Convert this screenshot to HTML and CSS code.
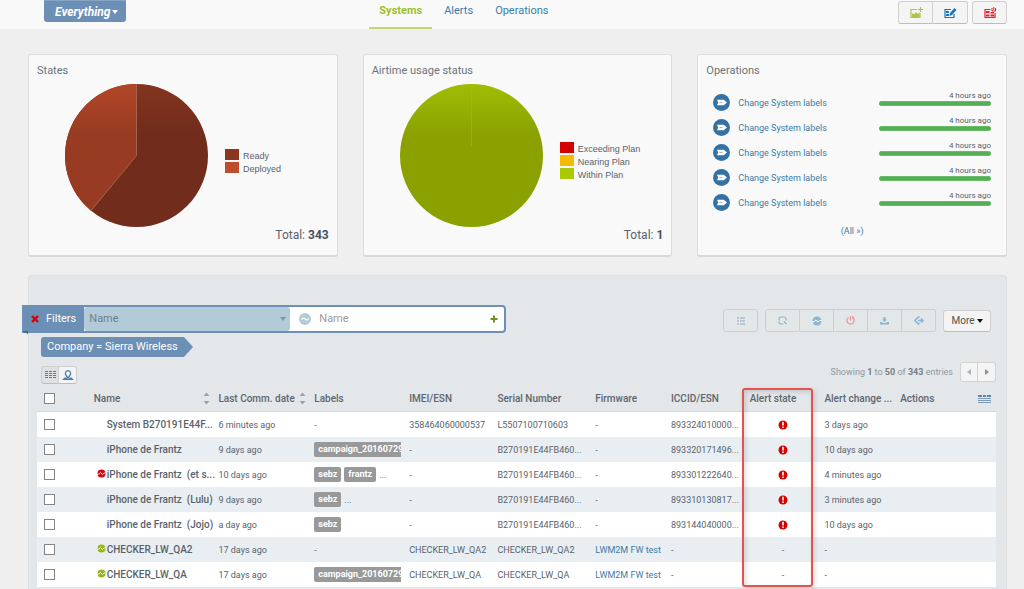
FILE: index.html
```html
<!DOCTYPE html>
<html lang="en">
<head>
<meta charset="utf-8">
<title>Systems</title>
<link rel="stylesheet" href="styles.css">
</head>
<body>
<svg class="defs" aria-hidden="true">
  <symbol id="i-op" viewBox="0 0 17 17"><circle cx="8.500" cy="8.500" r="8.500" fill="#3472a4"/><path d="M4 5.800h6.800l3.200 2.700-3.200 2.700H4l1.200-2.700z" fill="#fff"/><path d="M6.500 8.500h3" stroke="#9dbbd3"/></symbol>
  <symbol id="i-alert" viewBox="0 0 10 10"><circle cx="5" cy="5" r="4.500" fill="#d60000"/><path d="M4.200 1.800h1.600v3.600H4.200zM4.200 6.500h1.600v1.600H4.200z" fill="#fff"/></symbol>
  <symbol id="i-comm" viewBox="0 0 10 10"><circle cx="5" cy="5" r="4.500" fill="currentColor"/><path d="M0 5.800 2.200 5.600 4 3.900 6 6.200 7.800 4.500 10 4.400" fill="none" stroke="#fff" stroke-width="1"/></symbol>
  <symbol id="i-sort" viewBox="0 0 7 13"><path d="M.5 4 3.500.5l3 3.500zM.5 9l3 3.500 3-3.500z" fill="#9aa2a8"/></symbol>
</svg>

<header class="topbar">
  <button class="scope" type="button">Everything<span class="caret"></span></button>
  <nav class="tabs">
    <a class="tab tab-active" href="#systems">Systems</a>
    <a class="tab" href="#alerts">Alerts</a>
    <a class="tab" href="#operations">Operations</a>
  </nav>
  <div class="top-actions">
    <div class="btn-group">
      <button class="btn green" type="button" aria-label="Add widget"><svg width="14" height="12" viewBox="0 0 14 12"><path d="M8 2.500H2v8h9V6" fill="none" stroke="currentColor" stroke-width="1.200"/><path d="M3 10V6l2 1.500L7 5l2 2 1.500-2v5z" fill="currentColor"/><path d="M11.500 0v5M9 2.500h5" stroke="currentColor" stroke-width="1.200"/></svg></button>
      <button class="btn blue" type="button" aria-label="Edit dashboard"><svg width="14" height="12" viewBox="0 0 14 12"><path d="M8 2.500H2v8h9V7" fill="none" stroke="currentColor" stroke-width="1.200"/><path d="M3 4h3v2H3zM3 7h3v2H3z" fill="currentColor"/><path d="m6.500 9 .5-3 4.500-5L13.500 3 9 8z" fill="currentColor"/></svg></button>
    </div>
    <div class="btn-group">
      <button class="btn red" type="button" aria-label="Remove dashboard"><svg width="14" height="12" viewBox="0 0 14 12"><path d="M7.500 2.500H2v8h10V6" fill="none" stroke="currentColor" stroke-width="1.200"/><path d="M3 4h3.500v2H3zM3 7.500h3.500v2H3zM7.500 7.500H11v2H7.500zM7.500 5H11v1.500H7.500z" fill="currentColor"/><path d="M9 1v3h3.500V1M10.800 0v3" fill="none" stroke="currentColor"/></svg></button>
    </div>
  </div>
</header>

<main class="page">
  <div class="cards">
    <section class="card">
      <h2>States</h2>
      <div class="chart">
        <svg class="pie" width="143" height="143" viewBox="0 0 143 143" role="img" aria-label="States">
          <defs>
            <linearGradient id="g1" gradientUnits="userSpaceOnUse" x1="0" y1="0" x2="0" y2="50"><stop offset="0" stop-color="#83351f"/><stop offset="1" stop-color="#722c1b"/></linearGradient>
            <linearGradient id="g2" gradientUnits="userSpaceOnUse" x1="0" y1="0" x2="0" y2="50"><stop offset="0" stop-color="#b24627"/><stop offset="1" stop-color="#983b23"/></linearGradient>
          </defs>
          <circle cx="71.500" cy="71.500" r="71.500" fill="url(#g1)"/>
          <path d="M71.500 71.500V0A71.500 71.500 0 0 0 26 126.700z" fill="url(#g2)"/>
          <path d="M71.500 0v71.500L26 126.700" fill="none" stroke="#a4634f"/>
        </svg>
        <ul class="legend">
          <li><i class="swatch s-ready"></i>Ready</li>
          <li><i class="swatch s-deployed"></i>Deployed</li>
        </ul>
      </div>
      <p class="total">Total: <b>343</b></p>
    </section>
    <section class="card">
      <h2>Airtime usage status</h2>
      <div class="chart">
        <svg class="pie" width="143" height="143" viewBox="0 0 143 143" role="img" aria-label="Airtime usage status">
          <defs><linearGradient id="g3" gradientUnits="userSpaceOnUse" x1="0" y1="0" x2="0" y2="52"><stop offset="0" stop-color="#a0bd04"/><stop offset="1" stop-color="#8aa100"/></linearGradient></defs>
          <circle cx="71.500" cy="71.500" r="71.500" fill="url(#g3)"/>
          <path d="M71.500 0v62" stroke="#a6b83c" stroke-opacity=".5"/>
        </svg>
        <ul class="legend">
          <li><i class="swatch s-exceed"></i>Exceeding Plan</li>
          <li><i class="swatch s-near"></i>Nearing Plan</li>
          <li><i class="swatch s-within"></i>Within Plan</li>
        </ul>
      </div>
      <p class="total">Total: <b>1</b></p>
    </section>
    <section class="card">
      <h2>Operations</h2>
      <ul class="ops">
        <li><svg width="17" height="17"><use href="#i-op"/></svg><a href="#op1">Change System labels</a><div class="ago">4 hours ago<div class="bar"></div></div></li>
        <li><svg width="17" height="17"><use href="#i-op"/></svg><a href="#op2">Change System labels</a><div class="ago">4 hours ago<div class="bar"></div></div></li>
        <li><svg width="17" height="17"><use href="#i-op"/></svg><a href="#op3">Change System labels</a><div class="ago">4 hours ago<div class="bar"></div></div></li>
        <li><svg width="17" height="17"><use href="#i-op"/></svg><a href="#op4">Change System labels</a><div class="ago">4 hours ago<div class="bar"></div></div></li>
        <li><svg width="17" height="17"><use href="#i-op"/></svg><a href="#op5">Change System labels</a><div class="ago">4 hours ago<div class="bar"></div></div></li>
      </ul>
      <p class="all"><a href="#all">(All »)</a></p>
    </section>
  </div>

  <section class="panel">
    <div class="filter-row">
      <form class="filters">
        <button class="filters-label" type="button"><svg width="8" height="8" viewBox="0 0 8 8"><path d="m1 1 6 6M7 1 1 7" stroke="#d40000" stroke-width="2.400"/></svg>Filters</button>
        <div class="field-select">
          <select aria-label="Filter field"><option>Name</option></select>
        </div>
        <svg class="match" width="12" height="12" viewBox="0 0 12 12"><circle cx="6" cy="6" r="6" fill="#b3cbd9"/><path d="M2.500 6.800Q4 4 6 6t3.500-.8" fill="none" stroke="#fff" stroke-width="1.200"/></svg>
        <input type="text" placeholder="Name" aria-label="Name">
        <button class="add" type="button" aria-label="Add filter"><svg width="8" height="8" viewBox="0 0 8 8"><path d="M4 .5v7M.5 4h7" stroke="#6f8e23" stroke-width="2"/></svg></button>
      </form>
      <div class="toolbar">
        <div class="btn-group solo">
          <button class="btn tool" type="button" aria-label="Details"><svg width="8" height="8" viewBox="0 0 8 8"><path d="M0 1h2M3 1h5M0 4h2M3 4h5M0 7h2M3 7h5" stroke="currentColor" stroke-width="1.400"/></svg></button>
        </div>
        <div class="btn-group">
          <button class="btn tool" type="button" aria-label="Refresh"><svg width="9" height="9" viewBox="0 0 9 9"><path d="M1 4.500V3Q1 1 3 1h3q2 0 2 2v1.500M1 5.500Q1 8 3 8h2.500M6 5.500l2.500 2.500" fill="none" stroke="currentColor" stroke-width="1.200"/></svg></button>
          <button class="btn tool" type="button" aria-label="Communicate"><svg width="10" height="10"><use href="#i-comm"/></svg></button>
          <button class="btn tool danger" type="button" aria-label="Reboot"><svg width="9" height="9" viewBox="0 0 9 9"><path d="M2.500 1.500a3.600 3.600 0 1 0 4 0M4.500 0v4.500M7 0v2.500h1.500" fill="none" stroke="currentColor" stroke-width="1.200"/></svg></button>
          <button class="btn tool" type="button" aria-label="Install"><svg width="9" height="9" viewBox="0 0 9 9"><path d="M3.500 1h2v2.500H7L4.500 6 2 3.500h1.500zM0 6h2l1 1h3l1-1h2v2.500H0z" fill="currentColor"/></svg></button>
          <button class="btn tool" type="button" aria-label="Change offer"><svg width="10" height="9" viewBox="0 0 10 9"><path d="M5.500 1.500 4.500 1 1 4.500 4.500 8l1-1M4 4.500h5M7 2.500l2 2-2 2" fill="none" stroke="currentColor" stroke-width="1.600"/></svg></button>
        </div>
        <button class="btn more" type="button">More<span class="caret"></span></button>
      </div>
    </div>
    <div class="tag"><span>Company = Sierra Wireless</span></div>
    <div class="list-head">
      <div class="btn-group view">
        <button class="btn pressed" type="button" aria-label="List view"><svg width="11" height="8" viewBox="0 0 11 8"><path d="M0 .5h3m1 0h3m1 0h3M0 2.500h3m1 0h3m1 0h3M0 4.500h3m1 0h3m1 0h3M0 6.500h3m1 0h3m1 0h3" stroke="#3c86bd"/></svg></button>
        <button class="btn" type="button" aria-label="Map view"><svg width="12" height="10" viewBox="0 0 12 10"><path d="M6 8 3.500 4.500Q2.800 1 6 .7 9.200 1 8.500 4.500z" fill="none" stroke="#527fa9" stroke-width="1.300"/><path d="M2.500 7.500h2L6 9l1.500-1.500h2L12 10H0z" fill="#527fa9"/></svg></button>
      </div>
      <span class="showing">Showing <b>1</b> to <b>50</b> of <b>343</b> entries</span>
      <div class="btn-group pager">
        <button class="btn" type="button" aria-label="Previous page"><svg width="4" height="6" viewBox="0 0 4 6"><path d="M4 0v6L0 3z" fill="#aeb4b8"/></svg></button>
        <button class="btn" type="button" aria-label="Next page"><svg width="4" height="6" viewBox="0 0 4 6"><path d="M0 0v6l4-3z" fill="#888f94"/></svg></button>
      </div>
    </div>
    <div class="table-wrap">
      <table>
        <colgroup><col class="c-check"><col class="c-name"><col class="c-date"><col class="c-labels"><col class="c-imei"><col class="c-serial"><col class="c-fw"><col class="c-iccid"><col class="c-alert"><col class="c-change"><col class="c-actions"></colgroup>
        <thead>
          <tr>
            <th><input type="checkbox" aria-label="Select all"></th>
            <th><div class="th">Name<svg width="7" height="13"><use href="#i-sort"/></svg></div></th>
            <th><div class="th">Last Comm. date<svg width="7" height="13"><use href="#i-sort"/></svg></div></th>
            <th>Labels</th><th>IMEI/ESN</th><th>Serial Number</th><th>Firmware</th><th>ICCID/ESN</th><th>Alert state</th><th>Alert change ...</th>
            <th><div class="th th-actions">Actions<svg width="13" height="8" viewBox="0 0 13 8"><path d="M0 1h4M5 1h3M9 1h4" stroke="#5f84ab" stroke-width="2"/><path d="M0 3.500h13M0 5.500h13M0 7.500h13" stroke="#7d99b6"/></svg></div></th>
          </tr>
        </thead>
        <tbody>
          <tr><td><input type="checkbox" aria-label="Select System B270191E44F"></td><td class="name"><span class="st"></span>System B270191E44F...</td><td>6 minutes ago</td><td>-</td><td>358464060000537</td><td>L5507100710603</td><td>-</td><td>893324010000...</td><td class="state"><svg width="10" height="10"><use href="#i-alert"/></svg></td><td>3 days ago</td><td></td></tr>
          <tr><td><input type="checkbox" aria-label="Select iPhone de Frantz"></td><td class="name"><span class="st"></span>iPhone de Frantz</td><td>9 days ago</td><td><div class="labels"><span class="label cut">campaign_20160729</span></div></td><td>-</td><td>B270191E44FB460...</td><td>-</td><td>893320171496...</td><td class="state"><svg width="10" height="10"><use href="#i-alert"/></svg></td><td>10 days ago</td><td></td></tr>
          <tr><td><input type="checkbox" aria-label="Select iPhone de Frantz (et s...)"></td><td class="name"><span class="st bad"><svg width="9" height="9"><use href="#i-comm"/></svg></span>iPhone de Frantz &nbsp;(et s...</td><td>10 days ago</td><td><div class="labels"><span class="label">sebz</span><span class="label">frantz</span>...</div></td><td>-</td><td>B270191E44FB460...</td><td>-</td><td>893301222640...</td><td class="state"><svg width="10" height="10"><use href="#i-alert"/></svg></td><td>4 minutes ago</td><td></td></tr>
          <tr><td><input type="checkbox" aria-label="Select iPhone de Frantz (Lulu)"></td><td class="name"><span class="st"></span>iPhone de Frantz &nbsp;(Lulu)</td><td>9 days ago</td><td><div class="labels"><span class="label">sebz</span>...</div></td><td>-</td><td>B270191E44FB460...</td><td>-</td><td>893310130817...</td><td class="state"><svg width="10" height="10"><use href="#i-alert"/></svg></td><td>3 minutes ago</td><td></td></tr>
          <tr><td><input type="checkbox" aria-label="Select iPhone de Frantz (Jojo)"></td><td class="name"><span class="st"></span>iPhone de Frantz &nbsp;(Jojo)</td><td>a day ago</td><td><div class="labels"><span class="label">sebz</span></div></td><td>-</td><td>B270191E44FB460...</td><td>-</td><td>893144040000...</td><td class="state"><svg width="10" height="10"><use href="#i-alert"/></svg></td><td>10 days ago</td><td></td></tr>
          <tr><td><input type="checkbox" aria-label="Select CHECKER_LW_QA2"></td><td class="name"><span class="st good"><svg width="9" height="9"><use href="#i-comm"/></svg></span>CHECKER_LW_QA2</td><td>17 days ago</td><td>-</td><td>CHECKER_LW_QA2</td><td>CHECKER_LW_QA2</td><td><a href="#fw">LWM2M FW test</a></td><td>-</td><td class="state">-</td><td>-</td><td></td></tr>
          <tr><td><input type="checkbox" aria-label="Select CHECKER_LW_QA"></td><td class="name"><span class="st good"><svg width="9" height="9"><use href="#i-comm"/></svg></span>CHECKER_LW_QA</td><td>17 days ago</td><td><div class="labels"><span class="label cut">campaign_20160729</span></div></td><td>CHECKER_LW_QA</td><td>CHECKER_LW_QA</td><td><a href="#fw">LWM2M FW test</a></td><td>-</td><td class="state">-</td><td>-</td><td></td></tr>
        </tbody>
      </table>
      <div class="highlight"></div>
    </div>
  </section>
</main>
</body>
</html>
```

FILE: styles.css
```css
* { box-sizing: border-box; }
body {
  margin: 0;
  min-height: 100vh;
  display: flex;
  flex-direction: column;
  background: #efefef;
  color: #59636b;
  font: 10px/16px Roboto, "Liberation Sans", sans-serif;
}
button, input, select { font: inherit; color: inherit; margin: 0; }
button { padding: 0; cursor: pointer; }
a { color: #3a7ca8; text-decoration: none; }
ul { list-style: none; margin: 0; padding: 0; }
h2, p { margin: 0; }
svg { display: block; flex: none; }
.defs { position: absolute; width: 0; height: 0; }

/* Top bar */
.topbar {
  display: grid;
  grid-template-columns: 325fr auto 448fr;
  align-items: start;
  height: 29px;
  padding: 0 17px 0 44px;
  background: #f9f9f9;
}
.scope {
  justify-self: start;
  display: flex;
  align-items: center;
  gap: 2px;
  height: 22px;
  padding: 0 8px 0 11px;
  border: 0;
  border-top: 1px solid #86a5c5;
  border-radius: 0 0 3px 3px;
  background: #6b8fb5;
  color: #fff;
  font-size: 12px;
  font-weight: 700;
  font-style: italic;
}
.caret {
  border: 3px solid transparent;
  border-top: 4px solid currentColor;
  border-bottom: 0;
}
.tabs { display: flex; gap: 2px; }
.tab { height: 29px; padding: 3px 10px 0; font-size: 11px; }
.tab-active { border-bottom: 2px solid #c3d86f; color: #a0bf28; font-weight: 700; }
.top-actions { display: flex; justify-content: flex-end; gap: 4px; padding-top: 1px; }

/* Buttons */
.btn-group { display: flex; }
.btn {
  display: flex;
  align-items: center;
  justify-content: center;
  width: 35px;
  height: 23px;
  border: 1px solid #cfcfcf;
  border-bottom-color: #bdbdbd;
  background: #f4f4f4;
}
.btn-group .btn + .btn { border-left: 0; }
.btn:first-child { border-top-left-radius: 3px; border-bottom-left-radius: 3px; }
.btn:last-child { border-top-right-radius: 3px; border-bottom-right-radius: 3px; }
.green { color: #aac34c; }
.blue { color: #1b75bb; }
.red { color: #ee1c25; }

/* Dashboard cards */
.page { display: flex; flex: 1; flex-direction: column; gap: 18px; padding: 25px 17px 0 28px; }
.cards { display: grid; grid-template-columns: repeat(3, 1fr); gap: 25px; }
.card {
  min-height: 203px;
  padding: 8px 8px 12px;
  border: 1px solid #dedede;
  border-bottom: 2px solid #d8d8d8;
  border-radius: 3px;
  background: #f9f9f9;
}
h2 { font-size: 11px; font-weight: 400; color: #6a7379; }
.chart { display: flex; align-items: center; gap: 17px; padding: 5px 0 0 28px; }
.legend { padding-top: 14px; font: 9px/13px "Liberation Sans", sans-serif; }
.legend li { display: flex; align-items: center; gap: 4px; height: 13px; }
.swatch { width: 14px; height: 11px; margin-bottom: 4px; }
.s-ready { background: #8c3621; }
.s-deployed { background: #bf4c2b; }
.s-exceed { background: #d40000; }
.s-near { background: #f4bb00; }
.s-within { background: #a9c900; }
.total { font-size: 12px; text-align: right; color: #59636b; }
.total b { color: #44525d; }

.ops { padding: 11px 7px 0; }
.ops li { display: flex; align-items: center; gap: 8px; height: 25px; font-size: 9px; }
.ops a { flex: 1; }
.ago { width: 112px; margin-bottom: 9px; font-size: 8px; line-height: 11px; text-align: right; }
.bar { height: 5px; border: 1px solid #69bd69; border-radius: 2px; background: #55ae56; }
.all { margin-top: 8px; font-size: 9px; text-align: center; }

/* Systems list */
.panel {
  flex: 1;
  padding: 29px 10px 0 8px;
  border: 1px solid #dddfe0;
  border-bottom: 0;
  border-radius: 4px 4px 0 0;
  background: #e3e7ea;
}
.filter-row { display: flex; justify-content: space-between; align-items: flex-start; }
.filters {
  position: relative;
  display: flex;
  align-items: center;
  width: 484px;
  height: 28px;
  margin-left: -15px;
  padding-right: 6px;
  border: 2px solid #6e90b5;
  border-left: 0;
  border-radius: 2px 4px 4px 0;
  background: #fff;
}
.filters::after {
  content: "";
  position: absolute;
  left: 0;
  top: 100%;
  border: solid transparent;
  border-width: 0 0 4px 6px;
  border-top: 3px solid #47688d;
}
.filters-label {
  display: flex;
  align-items: center;
  gap: 7px;
  height: 28px;
  padding: 0 8px 0 9px;
  border: 0;
  background: #6b8fb5;
  color: #fff;
  font-size: 11px;
}
.field-select { position: relative; width: 206px; height: 24px; }
.field-select::after {
  content: "";
  position: absolute;
  right: 4px;
  top: 10px;
  border: 3px solid transparent;
  border-top: 4px solid #8795a0;
  border-bottom: 0;
}
select {
  width: 100%;
  height: 24px;
  padding: 0 5px;
  appearance: none;
  border: 0;
  border-radius: 3px;
  background: #b3cbd9;
  color: #6d808d;
  font-size: 11px;
}
.match { margin-left: 9px; }
.filters input { flex: 1; min-width: 0; padding: 0 8px; border: 0; background: none; font-size: 11px; }
.filters input::placeholder { color: #9b9b9b; }
.add { border: 0; background: none; }
.toolbar { display: flex; gap: 7px; padding: 4px 5px 0 0; }
.tool { border-color: #cdd0d2; background: #e4e7e8; color: #88b6d6; }
.btn-group .tool + .tool { width: 34px; }
.solo .tool { color: #a5bccf; }
.btn.danger { color: #ec9296; }
.more { gap: 2px; width: 48px; height: 22px; margin-top: 1px; border-radius: 3px; color: #505050; font-size: 10px; }
.more .caret { color: #111; }

.tag {
  display: flex;
  width: 152px;
  height: 20px;
  margin: 4px 0 0 4px;
  padding: 2px 6px;
  border-radius: 3px;
  background: #6b8fb5;
  clip-path: polygon(0 0, 143px 0, 100% 50%, 143px 100%, 0 100%);
  color: #fff;
  font-size: 11px;
  line-height: 16px;
  white-space: nowrap;
}
.list-head { display: flex; align-items: center; gap: 7px; height: 29px; }
.view { margin: 6px auto 0 4px; }
.view .btn { width: 18px; height: 18px; }
.pressed { background: #dfe1e2; }
.showing { color: #8f999f; font-size: 9px; }
.showing b { color: #778187; }
.pager .btn { width: 18px; height: 20px; border-color: #d3d3d3; }

.table-wrap { position: relative; }
table { width: 100%; table-layout: fixed; border-collapse: separate; border-spacing: 0; }
.c-check { width: 5.5%; }
.c-name { width: 13%; }
.c-date { width: 10%; }
.c-labels { width: 9.9%; }
.c-imei { width: 9.2%; }
.c-serial { width: 10.2%; }
.c-fw { width: 7.9%; }
.c-iccid { width: 8.2%; }
.c-alert { width: 7.8%; }
.c-change { width: 7.9%; }
th, td { height: 25px; padding: 0 4px; text-align: left; white-space: nowrap; vertical-align: middle; }
th { height: 26px; border-bottom: 1px solid #d7dadb; color: #5c666e; font-weight: 500; }
td { font-size: 9px; }
tbody tr { background: #fff; }
tbody tr:nth-child(even) { background: #e9eef2; }
th:first-child, td:first-child { padding-left: 7px; }
td.name { padding: 0 0 0 7px; font-size: 10px; font-weight: 500; }
.th { display: flex; align-items: center; justify-content: space-between; }
.th-actions { padding-right: 1px; }
.st { display: inline-block; width: 10px; }
.bad { color: #e3000f; }
.good { color: #94b51c; }
.state { text-align: center; }
.state svg { margin: 0 auto; }
.labels { display: flex; align-items: center; gap: 3px; }
.label {
  height: 15px;
  padding: 0 4px;
  border-radius: 2px;
  background: #999;
  color: #fff;
  font-size: 9px;
  font-weight: 700;
  line-height: 15px;
}
.cut { width: 100%; padding-right: 0; border-radius: 2px 0 0 2px; overflow: hidden; }
input[type="checkbox"] {
  display: block;
  width: 11px;
  height: 11px;
  appearance: none;
  border: 1px solid #858585;
  background: #fff;
}
.highlight {
  position: absolute;
  top: 2px;
  bottom: 0;
  left: 73.5%;
  width: 7.4%;
  border: 2px solid #e05550;
  border-radius: 3px;
  box-shadow: 2px 2px 5px #0002, inset 2px 2px 5px #0002;
  pointer-events: none;
}
```
